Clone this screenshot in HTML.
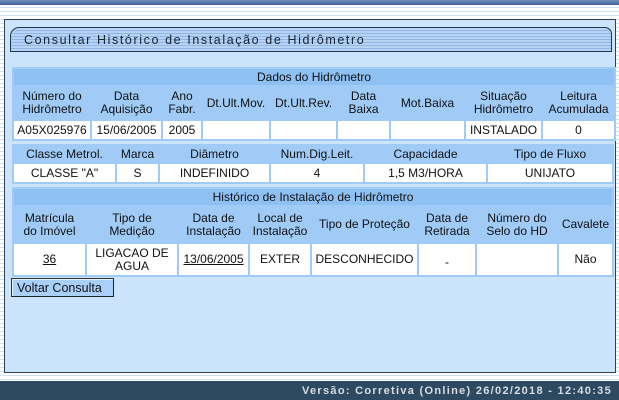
<!DOCTYPE html>
<html><head><meta charset="utf-8"><style>
*{margin:0;padding:0;box-sizing:border-box}
body{width:619px;height:400px;overflow:hidden;position:relative;font-family:"Liberation Sans",Arial,sans-serif;font-size:12px;color:#111;
background:repeating-linear-gradient(#fff 0,#fff 3px,#cfe0f2 3px,#cfe0f2 4px);}
.top{position:absolute;left:0;top:0;width:619px;height:5px;background:linear-gradient(#6f8fb5,#3c64a0);}
.panel{position:absolute;left:4px;top:19px;width:612px;height:354px;background:#cbe4fc;border:1px solid #2b3f55;}
.title{position:absolute;left:10px;top:27px;width:602px;height:25px;border:1px solid #23364d;border-radius:9px 7px 0 0;
background:repeating-linear-gradient(#b7d4f4 0,#b7d4f4 2px,#8fb6e6 2px,#8fb6e6 3px);}
.title span{position:absolute;left:13px;top:5px;font-size:12.5px;letter-spacing:1.6px;color:#1a2433}
table{position:absolute;border-collapse:separate;border-spacing:2px;background:#9fcbf6;table-layout:fixed}
td{background:#fff;text-align:center;line-height:13px;padding:0;white-space:nowrap;overflow:hidden}
td.h{background:#9fcbf6;}
td.t{background:#8ec0f3;}
.btn{position:absolute;left:11px;top:278px;width:103px;height:19px;background:#a9d0fa;border:1px solid #333;border-right-color:#222;border-bottom-color:#222;font-size:12.5px;padding:2px 0 0 5px;box-shadow:inset 1px 1px 0 #e0f0ff}
.foot{position:absolute;left:0;top:381px;width:619px;height:19px;background:#2e4a62;}
.foot span{position:absolute;right:7px;top:4px;color:#d8dde2;font-weight:bold;font-size:11px;letter-spacing:1.3px}
u{text-decoration:underline}
</style></head><body>
<div class="top"></div>
<div class="panel"></div>
<div class="title"><span>Consultar Histórico de Instalação de Hidrômetro</span></div>

<table style="left:12px;top:67px;width:596px">
<colgroup><col style="width:76px"><col style="width:69px"><col style="width:38px"><col style="width:66px"><col style="width:65px"><col style="width:51px"><col style="width:73px"><col style="width:75px"><col style="width:71px"></colgroup>
<tr><td class="t" colspan="9" style="height:16px">Dados do Hidrômetro</td></tr>
<tr style="height:32px"><td class="h">Número do<br>Hidrômetro</td><td class="h">Data<br>Aquisição</td><td class="h">Ano<br>Fabr.</td><td class="h">Dt.Ult.Mov.</td><td class="h">Dt.Ult.Rev.</td><td class="h">Data<br>Baixa</td><td class="h">Mot.Baixa</td><td class="h">Situação<br>Hidrômetro</td><td class="h">Leitura<br>Acumulada</td></tr>
<tr style="height:18px"><td>A05X025976</td><td>15/06/2005</td><td>2005</td><td></td><td></td><td></td><td></td><td>INSTALADO</td><td>0</td></tr>
</table>

<table style="left:12px;top:144px;width:596px">
<colgroup><col style="width:101px"><col style="width:41px"><col style="width:109px"><col style="width:92px"><col style="width:121px"><col style="width:124px"></colgroup>
<tr style="height:16px"><td class="h">Classe Metrol.</td><td class="h">Marca</td><td class="h">Diâmetro</td><td class="h">Num.Dig.Leit.</td><td class="h">Capacidade</td><td class="h">Tipo de Fluxo</td></tr>
<tr style="height:18px"><td>CLASSE "A"</td><td>S</td><td>INDEFINIDO</td><td>4</td><td>1,5 M3/HORA</td><td>UNIJATO</td></tr>
</table>

<table style="left:12px;top:187px;width:596px">
<colgroup><col style="width:71px"><col style="width:90px"><col style="width:69px"><col style="width:60px"><col style="width:105px"><col style="width:56px"><col style="width:80px"><col style="width:53px"></colgroup>
<tr><td class="t" colspan="8" style="height:16px">Histórico de Instalação de Hidrômetro</td></tr>
<tr style="height:35px"><td class="h">Matrícula<br>do Imóvel</td><td class="h">Tipo de<br>Medição</td><td class="h">Data de<br>Instalação</td><td class="h">Local de<br>Instalação</td><td class="h">Tipo de Proteção</td><td class="h">Data de<br>Retirada</td><td class="h">Número do<br>Selo do HD</td><td class="h">Cavalete</td></tr>
<tr style="height:31px"><td><u>36</u></td><td>LIGACAO DE<br>AGUA</td><td><u>13/06/2005 </u></td><td>EXTER</td><td>DESCONHECIDO</td><td style="padding-top:6px">-</td><td></td><td>Não</td></tr>
</table>

<div class="btn">Voltar Consulta</div>
<div class="foot"><span>Versão: Corretiva (Online) 26/02/2018 - 12:40:35</span></div>
</body></html>
